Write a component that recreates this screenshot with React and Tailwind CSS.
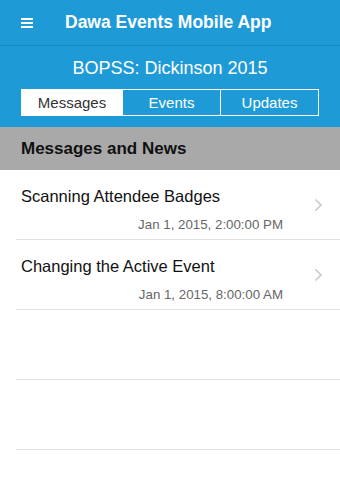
const messages = [
  { title: "Scanning Attendee Badges", date: "Jan 1, 2015, 2:00:00 PM" },
  { title: "Changing the Active Event", date: "Jan 1, 2015, 8:00:00 AM" },
];

const tabs = ["Messages", "Events", "Updates"];

function Chevron() {
  return (
    <svg width="9" height="14" viewBox="0 0 9 14" fill="none">
      <path d="M1.5 1.5 L7 7 L1.5 12.5" stroke="#c7c7cc" strokeWidth="1.6" />
    </svg>
  );
}

export default function App() {
  return (
    <div className="h-[489px] w-[340px] overflow-hidden bg-white font-['Liberation_Sans',Arial,sans-serif]">
      <header className="bg-[#1e9bd7] text-white">
        <div className="flex h-[46px] items-center border-b border-[#1787bf] px-[21px]">
          <div className="flex w-[12px] flex-col gap-[2px]">
            <span className="h-[2px] bg-white" />
            <span className="h-[2px] bg-white" />
            <span className="h-[2px] bg-white" />
          </div>
          <h1 className="ml-[32px] text-[17.5px] font-bold">Dawa Events Mobile App</h1>
        </div>
        <div className="pt-[11px] text-center text-[18px] leading-[22px]">BOPSS: Dickinson 2015</div>
        <div className="mx-[21px] mt-[10px] flex h-[27px] border border-white text-[15px]">
          {tabs.map((t, i) => (
            <div
              key={t}
              className={
                i === 0
                  ? "flex w-[100px] items-center justify-center bg-white pt-[2px] text-[#333]"
                  : "flex flex-1 items-center justify-center border-l border-white pt-[2px]"
              }
            >
              {t}
            </div>
          ))}
        </div>
        <div className="h-[11px]" />
      </header>

      <div className="flex h-[43px] items-center bg-[#a9a9a9] px-[21px] pt-[1px] text-[17px] font-bold text-[#111]">
        Messages and News
      </div>

      <ul>
        {messages.map((m) => (
          <li key={m.title} className="ml-[16px] flex h-[70px] items-center border-b border-[#e2e2e2] pr-[17px]">
            <div className="flex-1 self-start pl-[5px] pt-[16px]">
              <div className="text-[16.5px] leading-[20px] text-[#111]">{m.title}</div>
              <div className="mt-[11px] pr-[31px] text-right text-[13.3px] leading-[16px] text-[#666]">{m.date}</div>
            </div>
            <Chevron />
          </li>
        ))}
        <li className="ml-[16px] h-[70px] border-b border-[#e2e2e2]" />
        <li className="ml-[16px] h-[70px] border-b border-[#e2e2e2]" />
      </ul>
    </div>
  );
}
